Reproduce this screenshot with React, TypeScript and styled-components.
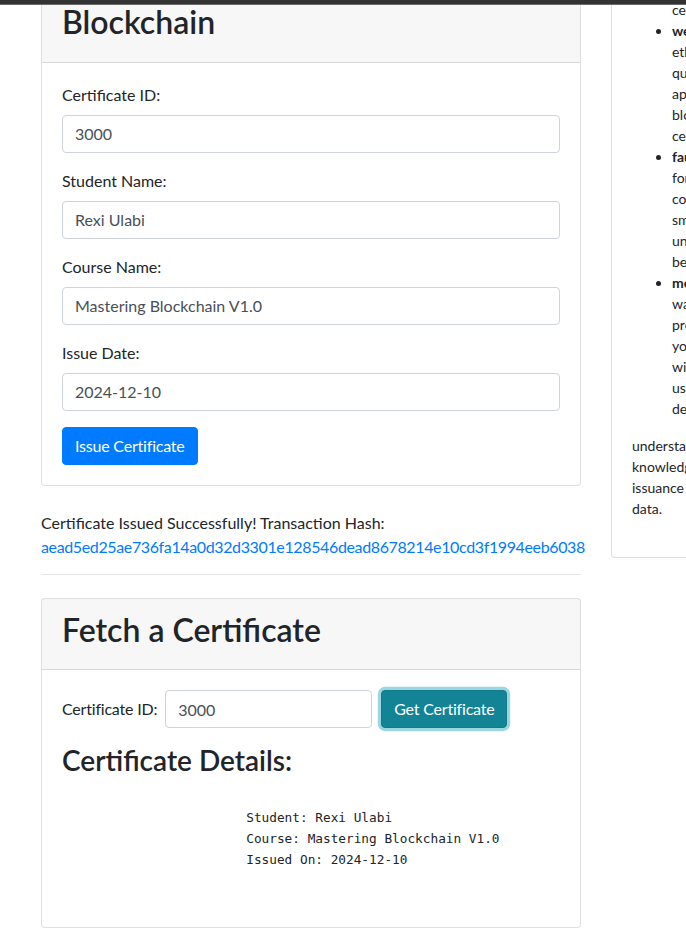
import React from "react";
import styled, { createGlobalStyle } from "styled-components";

const Global = createGlobalStyle`
  html, body { margin: 0; padding: 0; background: #fff; overflow: hidden; }
  body {
    font-family: Lato, "Noto Sans", sans-serif;
    font-size: 16px;
    line-height: 1.5;
    color: #212529;
  }
  *, *::before, *::after { box-sizing: border-box; }
`;

const TopBar = styled.div`
  position: fixed;
  top: 0;
  left: 0;
  right: 0;
  height: 5px;
  background: #333333;
  border-bottom: 1px solid #6b6b6b;
  z-index: 10;
`;

const Layout = styled.main`
  display: grid;
  grid-template-columns: 540px 420px;
  column-gap: 30px;
  align-items: start;
  padding-left: 41px;
  margin-top: -48px;
  width: max-content;
`;

const Column = styled.div<{ $shift?: number }>`
  display: flex;
  flex-direction: column;
  margin-top: ${(p) => p.$shift ?? 0}px;
`;

const Card = styled.section`
  background: #fff;
  border: 1px solid rgba(0, 0, 0, 0.125);
  border-radius: 4px;
`;

const CardHeader = styled.header`
  background: rgba(0, 0, 0, 0.03);
  border-bottom: 1px solid rgba(0, 0, 0, 0.125);
  padding: 12px 20px;
`;

const CardTitle = styled.h2`
  margin: 0 0 8px;
  font-size: 32px;
  font-weight: 600;
  line-height: 1.2;
`;

const CardBody = styled.div<{ $small?: boolean }>`
  padding: 20px;
  font-size: ${(p) => (p.$small ? "14px" : "16px")};
  line-height: ${(p) => (p.$small ? "21px" : "24px")};
`;

const FormGroup = styled.div`
  margin-bottom: 16px;
`;

const Label = styled.label`
  display: inline-block;
  margin-bottom: 8px;
`;

const Input = styled.input`
  display: block;
  width: 100%;
  height: 38px;
  padding: 6px 12px;
  font: inherit;
  font-size: 16px;
  line-height: 24px;
  color: #495057;
  background: #fff;
  border: 1px solid #ced4da;
  border-radius: 4px;
  outline: none;
`;

const Button = styled.button<{ $variant: "primary" | "info"; $focused?: boolean }>`
  display: inline-block;
  height: 38px;
  padding: 6px 12px;
  font: inherit;
  font-size: 16px;
  line-height: 24px;
  letter-spacing: -0.2px;
  color: #fff;
  border-radius: 4px;
  cursor: pointer;
  background: ${(p) => (p.$variant === "primary" ? "#007bff" : "#138496")};
  border: 1px solid ${(p) => (p.$variant === "primary" ? "#007bff" : "#117a8b")};
  box-shadow: ${(p) => (p.$focused ? "0 0 0 3.2px rgba(58, 176, 195, 0.5)" : "none")};
`;

const Result = styled.p`
  margin: 25px 0 0;
`;

const HashLink = styled.a`
  color: #007bff;
  text-decoration: none;
  letter-spacing: -0.37px;
`;

const Divider = styled.hr`
  margin: 15px 0 23px;
  border: 0;
  border-top: 1px solid rgba(0, 0, 0, 0.1);
`;

const InlineForm = styled.form`
  display: flex;
  align-items: center;
  margin-bottom: 16px;
`;

const InlineLabel = styled.label`
  margin-right: 8px;
  letter-spacing: -0.2px;
`;

const InlineInput = styled(Input)`
  display: inline-block;
  width: 207px;
  margin-right: 9px;
`;

const SubTitle = styled.h3`
  margin: 0 0 8px;
  font-size: 28px;
  font-weight: 600;
  line-height: 1.2;
`;

const Details = styled.pre`
  margin: 0 0 16px;
  font-family: "DejaVu Sans Mono", "Liberation Mono", monospace;
  font-size: 12.75px;
  line-height: 21px;
  color: #212529;
`;

const InfoList = styled.ul`
  margin: 0 0 16px;
  padding-left: 40px;
`;

const InfoItem = styled.li`
  white-space: nowrap;
`;

const InfoPara = styled.p`
  margin: 0 0 18px;
  white-space: nowrap;
`;

const pad = " ".repeat(24);
const details = `\n${pad}Student: Rexi Ulabi\n${pad}Course: Mastering Blockchain V1.0\n${pad}Issued On: 2024-12-10\n${pad}`;

export default function App() {
  return (
    <>
      <Global />
      <TopBar />
      <Layout>
        <Column>
          <Card>
            <CardHeader>
              <CardTitle>
                Issue a Certificate on the
                <br />
                Blockchain
              </CardTitle>
            </CardHeader>
            <CardBody>
              <FormGroup>
                <Label>Certificate ID:</Label>
                <Input defaultValue="3000" />
              </FormGroup>
              <FormGroup>
                <Label>Student Name:</Label>
                <Input defaultValue="Rexi Ulabi" />
              </FormGroup>
              <FormGroup>
                <Label>Course Name:</Label>
                <Input defaultValue="Mastering Blockchain V1.0" />
              </FormGroup>
              <FormGroup>
                <Label>Issue Date:</Label>
                <Input defaultValue="2024-12-10" />
              </FormGroup>
              <Button $variant="primary" type="button">
                Issue Certificate
              </Button>
            </CardBody>
          </Card>

          <Result>
            Certificate Issued Successfully! Transaction Hash:
            <br />
            <HashLink href="#">
              aead5ed25ae736fa14a0d32d3301e128546dead8678214e10cd3f1994eeb6038
            </HashLink>
          </Result>
          <Divider />

          <Card>
            <CardHeader>
              <CardTitle>Fetch a Certificate</CardTitle>
            </CardHeader>
            <CardBody>
              <InlineForm>
                <InlineLabel>Certificate ID:</InlineLabel>
                <InlineInput defaultValue="3000" />
                <Button $variant="info" $focused type="button">
                  Get Certificate
                </Button>
              </InlineForm>
              <SubTitle>Certificate Details:</SubTitle>
              <Details>{details}</Details>
            </CardBody>
          </Card>
        </Column>

        <Column $shift={-37}>
          <Card>
            <CardBody $small>
              <InfoList>
                <InfoItem>
                  <strong>solidity:</strong> The language used to write
                  <br />
                  the smart contract that stores and
                  <br />
                  verifies all issued academic
                  <br />
                  certificates.
                </InfoItem>
                <InfoItem>
                  <strong>web3.js:</strong> A JavaScript library used to
                  <br />
                  ethereum nodes, letting the app send
                  <br />
                  queries and transactions from the
                  <br />
                  application to the deployed
                  <br />
                  blockchain contract that holds the
                  <br />
                  certificates.
                </InfoItem>
                <InfoItem>
                  <strong>faucet:</strong> Used to obtain test ether
                  <br />
                  for deploying and interacting with the
                  <br />
                  contract on the test network, so the
                  <br />
                  smart contract can be exercised
                  <br />
                  under real network conditions
                  <br />
                  before going to production.
                </InfoItem>
                <InfoItem>
                  <strong>metamask:</strong> A browser extension
                  <br />
                  wallet that manages accounts and
                  <br />
                  provides a secure way to sign
                  <br />
                  your transactions, integrating
                  <br />
                  with the dApp so that every
                  <br />
                  user can confirm each action
                  <br />
                  deliberately.
                </InfoItem>
              </InfoList>
              <InfoPara>
                understanding of how a blockchain can be
                <br />
                knowledge that is shared and trusted, for
                <br />
                issuance and verification of tamper-proof
                <br />
                data.
              </InfoPara>
            </CardBody>
          </Card>
        </Column>
      </Layout>
    </>
  );
}
